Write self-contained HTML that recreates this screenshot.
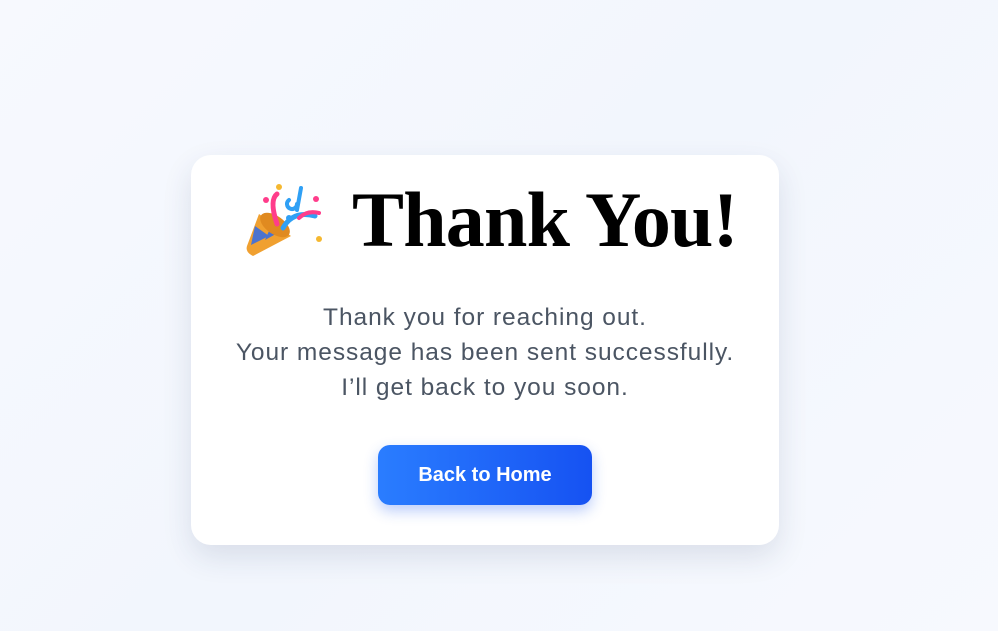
<!DOCTYPE html>
<html><head><style>
html,body{margin:0;width:998px;height:631px;overflow:hidden;background:linear-gradient(135deg,#f7f9fe,#f2f6fd 50%,#f7f9fe);font-family:"Liberation Sans",sans-serif}
.card{position:absolute;left:191px;top:155px;width:588px;height:390px;background:#fff;border-radius:20px;box-shadow:0 12px 30px rgba(30,50,90,.12)}
.emo{position:absolute;left:243px;top:180px}
h1{position:absolute;left:352px;top:170px;margin:0;font-family:"Liberation Serif",serif;font-weight:bold;font-size:78px;letter-spacing:-0.8px;line-height:100px;color:#000;white-space:nowrap}
p{position:absolute;left:191px;width:588px;top:300px;margin:0;text-align:center;font-size:24.5px;letter-spacing:.95px;line-height:35px;color:#4b5563}
.btn{position:absolute;left:378px;top:445px;width:214px;height:60px;border-radius:12px;background:linear-gradient(90deg,#2a7dff,#1652f2);color:#fff;font-weight:bold;font-size:20px;line-height:60px;text-align:center;box-shadow:0 6px 14px rgba(30,90,240,.3)}
</style></head><body>
<div class="card"></div>
<svg class="emo" width="80" height="80" viewBox="0 0 80 80">
<path d="M16 34 L48 56 L10 76 Q2 72 4 66 Z" fill="#f0a030"/>
<path d="M12 46 L26 56 L8 65 Z M30 42 L40 50 L22 60 Z" fill="#3a6ee0" opacity=".9"/>
<ellipse cx="32" cy="45" rx="17" ry="9" transform="rotate(35 32 45)" fill="#e08a20"/>
<path d="M34 44 Q26 20 34 14" stroke="#ff3d8b" stroke-width="5" fill="none" stroke-linecap="round"/>
<path d="M40 48 Q50 30 72 36" stroke="#2fa0f5" stroke-width="5" fill="none" stroke-linecap="round"/>
<path d="M58 8 L54 30 M54 24 a5 5 0 1 1 -8 -4" stroke="#2fa0f5" stroke-width="4" fill="none" stroke-linecap="round"/>
<path d="M56 38 Q64 30 76 33" stroke="#ff3d8b" stroke-width="4" fill="none" stroke-linecap="round"/>
<circle cx="36" cy="7" r="3" fill="#f5b830"/><circle cx="23" cy="20" r="3" fill="#ff3d8b"/><circle cx="73" cy="19" r="3" fill="#ff3d8b"/><circle cx="46" cy="38" r="3" fill="#2fa0f5"/><circle cx="76" cy="59" r="3" fill="#f5b830"/>
</svg>
<h1>Thank You!</h1>
<p>Thank you for reaching out.<br>Your message has been sent successfully.<br>I’ll get back to you soon.</p>
<div class="btn">Back to Home</div>
</body></html>
